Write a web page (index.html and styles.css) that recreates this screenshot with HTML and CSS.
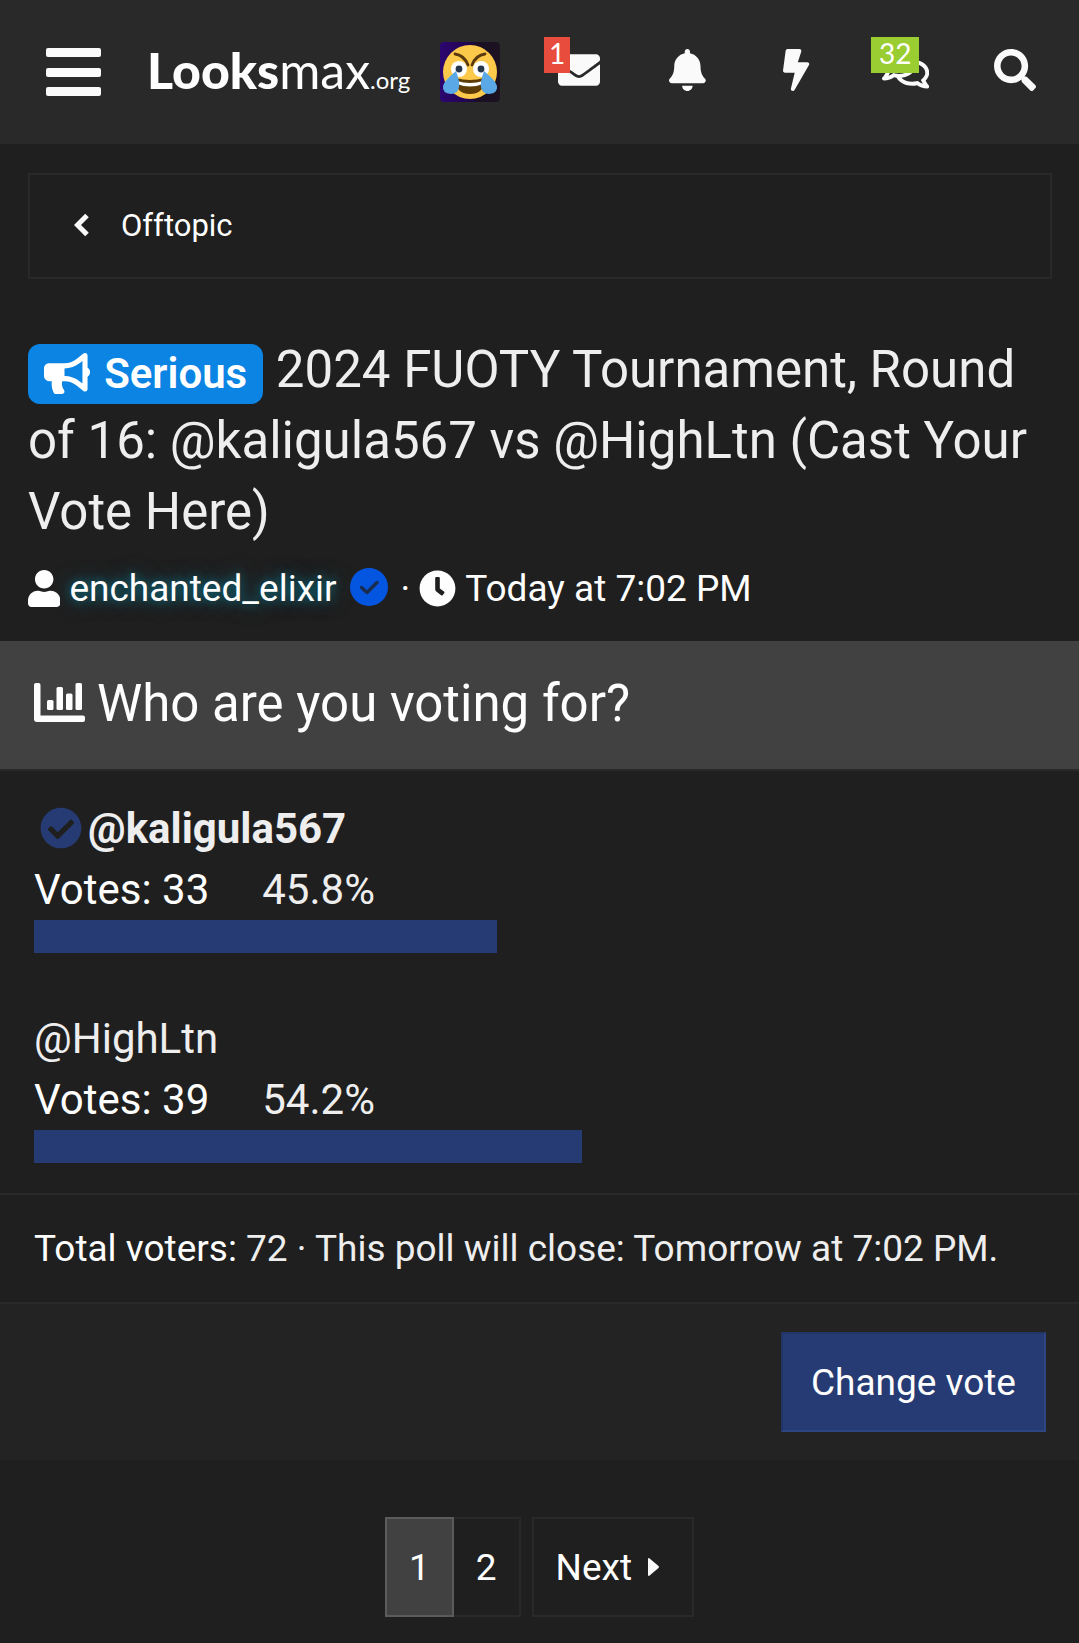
FILE: index.html
```html
<!DOCTYPE html>
<html lang="en">
<head>
  <meta charset="UTF-8" />
  <meta name="viewport" content="width=device-width, initial-scale=1" />
  <title>2024 FUOTY Tournament, Round of 16</title>
  <link rel="stylesheet" href="styles.css">
</head>
<body>

  <!-- Top navigation -->
  <header class="navbar">
    <button class="menu-button" aria-label="Menu">
      <span class="menu-bar"></span>
      <span class="menu-bar"></span>
      <span class="menu-bar"></span>
    </button>
    <a class="logo" href="#"><b>Looks</b>max<small>.org</small></a>
    <nav class="nav-icons">
      <a href="#" class="nav-link" aria-label="Account">
        <svg class="avatar" viewBox="0 0 60 60">
          <defs>
            <linearGradient id="avatarBg">
              <stop offset="0" stop-color="#2c0670" />
              <stop offset="0.45" stop-color="#230450" />
              <stop offset="0.65" stop-color="#1b1024" />
              <stop offset="1" stop-color="#1c1220" />
            </linearGradient>
          </defs>
          <rect width="60" height="60" rx="4" fill="url(#avatarBg)" />
          <circle cx="30" cy="30" r="27" fill="#fdc94b" />
          <path d="M15 12q9 1 13 11M45 12q-9 1-13 11" fill="none" stroke="#5a3a0c" stroke-width="2.8" stroke-linecap="round" />
          <circle cx="19" cy="27" r="8" fill="#fff" />
          <circle cx="41" cy="27" r="8" fill="#fff" />
          <circle cx="19" cy="27" r="3.4" fill="#25364a" />
          <circle cx="41" cy="27" r="3.4" fill="#25364a" />
          <path d="M16 36q14 4 28 0q1 16-14 16t-14-16z" fill="#5d3b05" />
          <path d="M17 39q13 4 26 0v3q-13 5-26 0z" fill="#fff" />
          <path d="M16 29q4 11 3 16-1 7-8 7-9-1-8-8 1-5 13-15zM44 29q-4 11-3 16 1 7 8 7 9-1 8-8-1-5-13-15z" fill="#5aa9e6" />
        </svg>
      </a>
      <a href="#" class="nav-link" aria-label="Inbox">
        <svg class="icon" viewBox="0 0 512 512"><path d="M502.3 190.8c3.9-3.1 9.7-.2 9.7 4.7V400c0 26.5-21.5 48-48 48H48c-26.5 0-48-21.5-48-48V195.6c0-5 5.7-7.8 9.7-4.7 22.4 17.4 52.1 39.5 154.1 113.6 21.1 15.4 56.7 47.8 92.2 47.6 35.7.3 72-32.8 92.3-47.6 102-74.1 131.6-96.3 154-113.7zM256 320c23.2.4 56.6-29.2 73.4-41.4 132.7-96.3 142.8-104.7 173.4-128.7 5.8-4.5 9.2-11.5 9.2-18.9v-19c0-26.5-21.5-48-48-48H48c-26.5 0-48 21.5-48 48v19c0 7.4 3.4 14.3 9.2 18.9 30.6 23.9 40.7 32.4 173.4 128.7 16.8 12.2 50.2 41.8 73.4 41.4z" /></svg>
        <span class="badge badge-red">1</span>
      </a>
      <a href="#" class="nav-link" aria-label="Alerts">
        <svg class="icon" viewBox="0 0 448 512"><path d="M224 512c35.32 0 63.97-28.65 63.97-64H160.03c0 35.35 28.65 64 63.97 64zm215.39-149.71c-19.32-20.76-55.47-51.99-55.47-154.29 0-77.7-54.48-139.9-127.94-155.16V32c0-17.67-14.32-32-31.98-32s-31.98 14.33-31.98 32v20.84C118.56 68.1 64.08 130.3 64.08 208c0 102.3-36.15 133.53-55.47 154.29-6 6.45-8.66 14.16-8.61 21.71.11 16.4 12.98 32 32.1 32h383.8c19.12 0 32-15.6 32.1-32 .05-7.55-2.61-15.27-8.61-21.71z" /></svg>
      </a>
      <a href="#" class="nav-link" aria-label="What's new">
        <svg class="icon" viewBox="0 0 320 512"><path d="M296 160H180.6l42.6-129.8C227.2 15 215.7 0 200 0H56C44 0 33.8 8.9 32.2 20.8l-32 240C-1.7 275.2 9.5 288 24 288h118.7L96.6 482.5c-3.6 15.2 8 29.5 23.3 29.5 8.4 0 16.4-4.4 20.8-12l176-304c9.3-15.9-2.2-36-20.7-36z" /></svg>
      </a>
      <a href="#" class="nav-link" aria-label="Chat">
        <svg class="icon" viewBox="0 0 576 512"><path d="M532 386.2c27.5-27.1 44-61.1 44-98.2 0-80-76.5-146.1-176.2-157.9C368.3 72.5 294.3 32 208 32 93.1 32 0 103.6 0 192c0 37 16.5 71 44 98.2-15.3 30.7-37.3 54.5-37.7 54.9-6.3 6.7-8.1 16.5-4.4 25 3.6 8.5 12 14 21.2 14 53.5 0 96.7-20.2 125.2-38.8 9.2 2.1 18.7 3.7 28.4 4.9C208.1 407.6 281.8 448 368 448c20.8 0 40.8-2.4 59.8-6.8C456.3 459.7 499.4 480 553 480c9.2 0 17.5-5.5 21.2-14 3.6-8.5 1.9-18.3-4.4-25-.4-.3-22.5-24.1-37.8-54.8zm-392.8-92.3L122.1 305c-14.1 9.1-28.5 16.3-43.1 21.4 2.7-4.7 5.4-9.7 8-14.8l15.5-31.1L77.7 256C64.2 242.6 48 220.7 48 192c0-60.7 73.3-112 160-112s160 51.3 160 112-73.3 112-160 112c-16.5 0-33-1.9-49-5.6l-19.8-4.5zM498.3 352l-24.7 24.4 15.5 31.1c2.6 5.1 5.3 10.1 8 14.8-14.6-5.1-29-12.3-43.1-21.4l-17.1-11.1-19.9 4.6c-16 3.7-32.5 5.6-49 5.6-54 0-102.2-20.1-131.3-49.7C338 339.5 416 272.9 416 192c0-3.4-.4-6.7-.7-10C479.7 196.5 528 238.8 528 288c0 28.7-16.2 50.6-29.7 64z" /></svg>
        <span class="badge badge-green">32</span>
      </a>
      <a href="#" class="nav-link" aria-label="Search">
        <svg class="icon" viewBox="0 0 512 512"><path d="M505 442.7L405.3 343c-4.5-4.5-10.6-7-17-7H372c27.6-35.3 44-79.7 44-128C416 93.1 322.9 0 208 0S0 93.1 0 208s93.1 208 208 208c48.3 0 92.7-16.4 128-44v16.3c0 6.4 2.5 12.5 7 17l99.7 99.7c9.4 9.4 24.6 9.4 33.9 0l28.3-28.3c9.4-9.4 9.4-24.6.1-34zM208 336c-70.7 0-128-57.2-128-128 0-70.7 57.2-128 128-128 70.7 0 128 57.2 128 128 0 70.7-57.2 128-128 128z" /></svg>
      </a>
    </nav>
  </header>

  <main>
    <nav class="breadcrumb">
      <a href="#">
        <svg class="chevron" viewBox="0 0 16 24"><path d="M13 2.500L3.500 12l9.500 9.500" /></svg>
        Offtopic
      </a>
    </nav>

    <!-- Thread title -->
    <div class="thread-header">
      <h1><span class="prefix"><svg class="icon" viewBox="0 0 576 512"><path d="M576 240c0-23.63-12.95-44.04-32-55.12V32.01C544 23.26 537.02 0 512 0c-7.12 0-14.19 2.38-19.98 7.02l-85.03 68.03C364.28 109.19 310.66 128 256 128H64c-35.35 0-64 28.65-64 64v96c0 35.35 28.65 64 64 64h33.7c-1.39 10.48-2.18 21.14-2.18 32 0 39.77 9.26 77.35 25.56 110.94 5.19 10.69 16.52 17.06 28.4 17.06h74.28c26.05 0 41.69-29.84 25.9-50.56-16.4-21.52-26.15-48.36-26.15-77.44 0-11.11 1.62-21.79 4.41-32H256c54.66 0 108.28 18.81 150.98 52.95l85.03 68.03a32.023 32.023 0 0 0 19.98 7.02c24.92 0 32-22.78 32-32V295.13C563.05 284.04 576 263.63 576 240zm-96 141.42l-33.05-26.44C392.95 311.78 325.12 288 256 288v-96c69.12 0 136.95-23.78 190.95-66.98L480 98.58v282.84z" /></svg>Serious</span> 2024 FUOTY Tournament, Round of 16: @kaligula567 vs @HighLtn (Cast Your Vote Here)</h1>
      <div class="thread-meta">
        <svg class="icon" viewBox="0 0 448 512"><path d="M224 256c70.7 0 128-57.3 128-128S294.7 0 224 0 96 57.3 96 128s57.3 128 128 128zm89.6 32h-16.7c-22.2 10.2-46.9 16-72.9 16s-50.6-5.8-72.9-16h-16.7C60.2 288 0 348.2 0 422.4V464c0 26.5 21.5 48 48 48h352c26.5 0 48-21.5 48-48v-41.6c0-74.2-60.2-134.4-134.4-134.4z" /></svg>
        <a href="#" class="username">enchanted_elixir</a>
        <svg class="verified" viewBox="0 0 38 38">
          <circle cx="19" cy="19" r="19" fill="#0455e0" />
          <path d="M11.500 19.500l5.500 5 10-10" fill="none" stroke="#1a2c50" stroke-width="3.500" stroke-linecap="round" stroke-linejoin="round" />
        </svg>
        <span class="separator">·</span>
        <svg class="icon" viewBox="0 0 512 512"><path d="M256,8C119,8,8,119,8,256S119,504,256,504,504,393,504,256,393,8,256,8Zm92.490,313h0l-20,25a16,16,0,0,1-22.490,2.500h0l-67-49.720a40,40,0,0,1-15-31.230V112a16,16,0,0,1,16-16h32a16,16,0,0,1,16,16V256l58,42.500A16,16,0,0,1,348.490,321Z" /></svg>
        <a href="#">Today at 7:02 PM</a>
      </div>
    </div>

    <!-- Poll -->
    <section class="poll">
      <h2 class="poll-title">
        <svg class="chart-icon" viewBox="0 0 51 39">
          <path d="M2 0h2.500q2 0 2 2v30.500H49q2 0 2 2V37q0 2-2 2H3q-3 0-3-3V2q0-2 2-2z" />
          <rect x="13" y="17" width="6.500" height="10" rx="1.500" />
          <rect x="22.500" y="4" width="6.500" height="23" rx="1.500" />
          <rect x="32" y="10.500" width="6.500" height="16.500" rx="1.500" />
          <rect x="41.500" y="0" width="6.500" height="27" rx="1.500" />
        </svg>
        Who are you voting for?
      </h2>
      <ul class="poll-options">
        <li>
          <h3 class="option-name voted">
            <svg class="icon" viewBox="0 0 512 512"><path d="M504 256c0 136.967-111.033 248-248 248S8 392.967 8 256 119.033 8 256 8s248 111.033 248 248zM227.314 387.314l184-184c6.248-6.248 6.248-16.379 0-22.627l-22.627-22.627c-6.248-6.249-16.379-6.249-22.628 0L216 308.118l-70.059-70.059c-6.248-6.248-16.379-6.248-22.628 0l-22.627 22.627c-6.248 6.248-6.248 16.379 0 22.627l104 104c6.249 6.249 16.379 6.249 22.628.001z" /></svg>
            @kaligula567
          </h3>
          <div class="option-result">
            <span class="votes">Votes: 33</span>
            <span>45.8%</span>
          </div>
          <div class="bar" style="width: 45.8%"></div>
        </li>
        <li>
          <h3 class="option-name">@HighLtn</h3>
          <div class="option-result">
            <span class="votes">Votes: 39</span>
            <span>54.2%</span>
          </div>
          <div class="bar" style="width: 54.2%"></div>
        </li>
      </ul>
      <div class="poll-info"><span class="label">Total voters:</span> 72 · This poll will close: Tomorrow at 7:02 PM.</div>
      <div class="poll-footer">
        <button class="vote-button">Change vote</button>
      </div>
    </section>

    <!-- Pagination -->
    <nav class="pagination">
      <a href="#" class="page current">1</a>
      <a href="#" class="page">2</a>
      <a href="#" class="page next">Next
        <svg class="caret" viewBox="0 0 11 18"><path d="M0 1q0-1 1-1l9.500 8q.8 1 0 2L1 18q-1 0-1-1z" /></svg>
      </a>
    </nav>
  </main>

</body>
</html>
```
FILE: styles.css
```css
* {
  box-sizing: border-box;
}
body {
  margin: 0;
  min-height: 100vh;
  background: #1f1f1f;
  color: #eee;
  font-family: Roboto, sans-serif;
  font-size: 37px;
  line-height: 51px;
}
a {
  color: #fefefe;
  text-decoration: none;
}
h1, h2, h3, ul {
  margin: 0;
  padding: 0;
  font-weight: 400;
}
button {
  font-family: inherit;
  cursor: pointer;
}
.icon {
  fill: currentColor;
  flex: none;
}

/* Top navigation */
.navbar {
  display: flex;
  align-items: center;
  height: 144px;
  padding: 0 10px 0 46px;
  background: #292929;
}
.menu-button {
  display: flex;
  flex-direction: column;
  justify-content: space-between;
  width: 55px;
  height: 48px;
  padding: 0;
  border: none;
  background: none;
}
.menu-bar {
  width: 100%;
  height: 9px;
  border-radius: 2px;
  background: #fafafa;
}
.logo {
  width: 268px;
  margin-left: 46px;
  padding-top: 6px;
  font-family: Lato, sans-serif;
  font-size: 50px;
  line-height: 60px;
  white-space: nowrap;
}
.logo b {
  font-weight: 900;
}
.logo small {
  font-size: 24px;
}
.nav-icons {
  display: flex;
  flex: 1;
}
.nav-link {
  position: relative;
  display: flex;
  flex: 1;
  justify-content: center;
  align-items: center;
  height: 60px;
  color: #fafafa;
}
.nav-link .icon {
  height: 42px;
  margin-bottom: 4px;
}
.avatar {
  width: 60px;
  height: 60px;
}
.badge {
  position: absolute;
  top: -5px;
  left: 20px;
  padding: 0 8px 3px;
  font-family: Lato, sans-serif;
  font-size: 28px;
  line-height: 33px;
  color: #fff;
}
.badge-red {
  padding: 0 5px 3px;
  background: #e74c3c;
}
.badge-green {
  background: #9acd32;
}

.breadcrumb {
  margin: 29px 27px 0 28px;
  border: 2px solid #292929;
  font-size: 31px;
}
.breadcrumb a {
  display: flex;
  align-items: center;
  gap: 31px;
  height: 102px;
  padding: 0 44px 2px;
}
.chevron {
  width: 16px;
  height: 24px;
  fill: none;
  stroke: #fafafa;
  stroke-width: 5;
}

/* Thread title */
.thread-header {
  padding: 55px 28px 27px;
}
.thread-header h1 {
  font-size: 51px;
  line-height: 71px;
}
.prefix {
  display: inline-flex;
  align-items: center;
  gap: 14px;
  height: 60px;
  padding: 0 16px;
  border-radius: 12px;
  background: #0b84e3;
  color: #fff;
  font-size: 42px;
  font-weight: 600;
  line-height: 60px;
  vertical-align: middle;
}
.prefix .icon {
  height: 41px;
}
.thread-meta {
  display: flex;
  align-items: center;
  gap: 9px;
  margin-top: 16px;
  color: #fefefe;
}
.thread-meta .icon {
  height: 37px;
}
.username {
  text-shadow: 0 0 10px rgba(0, 165, 200, 0.5), 0 0 20px rgba(0, 165, 200, 0.5);
}
.verified {
  width: 38px;
  height: 38px;
  margin: 0 0 4px 4px;
}
.separator {
  margin-left: 4px;
}

/* Poll */
.poll-title {
  display: flex;
  align-items: center;
  gap: 12px;
  padding: 27px 34px 29px;
  border-bottom: 2px solid #292929;
  background: #414141;
  background-clip: padding-box;
  color: #fefefe;
  font-size: 51px;
  line-height: 72px;
}
.chart-icon {
  width: 51px;
  height: 39px;
  margin-bottom: 4px;
  fill: currentColor;
}
.poll-options {
  display: grid;
  gap: 55px;
  padding: 27px 34px 30px;
  list-style: none;
  font-size: 42px;
  line-height: 61px;
}
.option-name {
  display: flex;
  align-items: center;
  font-size: 42px;
}
.option-name.voted {
  gap: 6px;
  padding-left: 6px;
  font-weight: 700;
}
.option-name .icon {
  height: 42px;
  margin-bottom: 2px;
  color: #263b73;
}
.option-result {
  display: flex;
  gap: 53px;
}
.votes, .label {
  color: #fefefe;
}
.bar {
  height: 33px;
  background: #263b73;
}
.poll-info {
  padding: 28px 34px;
  border-top: 2px solid #292929;
  border-bottom: 2px solid #292929;
}
.poll-footer {
  display: flex;
  justify-content: flex-end;
  padding: 28px 33px 28px 34px;
  background: #232323;
}
.vote-button {
  height: 100px;
  padding: 0 28px;
  border: 2px solid;
  border-color: #233566 #2d4580 #2d4580 #233566;
  background: #263b73;
  color: #fefefe;
  font-size: 37px;
}

/* Pagination */
.pagination {
  display: flex;
  justify-content: center;
  padding: 57px 28px 26px;
}
.page {
  display: flex;
  align-items: center;
  height: 100px;
  padding: 0 22px;
  border: 2px solid #292929;
}
.page + .page {
  border-left: none;
}
.page.current {
  border-color: #5b5b5b;
  background: #414141;
}
.page.next {
  gap: 16px;
  margin-left: 11px;
  padding-right: 33px;
  border-left: 2px solid #292929;
}
.caret {
  width: 11px;
  height: 18px;
  fill: #fafafa;
}
```
